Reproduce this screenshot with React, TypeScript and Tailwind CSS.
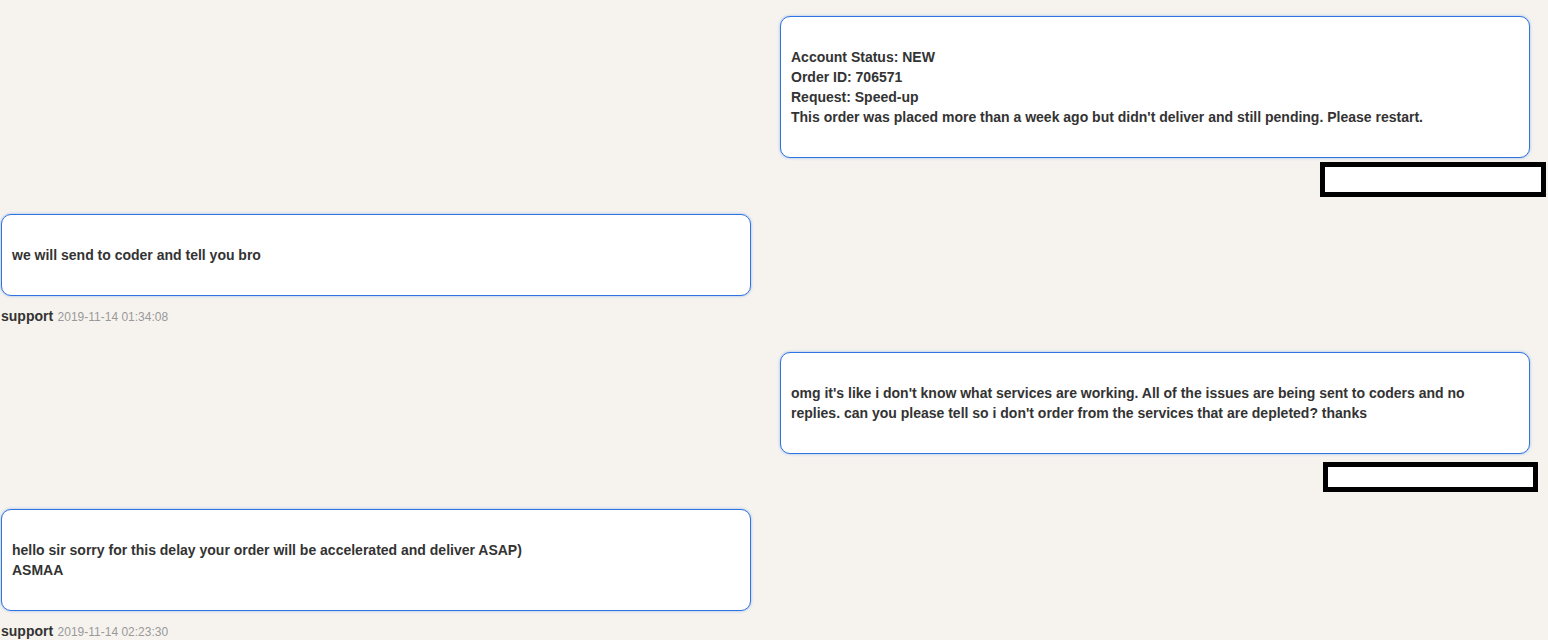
import React from "react";

function Bubble({ lines, align }: { lines: string[]; align: "left" | "right" }) {
  return (
    <div
      className={`w-[750px] rounded-[10px] border border-[#2f74e0] bg-white px-[10px] py-[30px] shadow-[0_0_3px_rgba(40,110,220,0.45)] ${
        align === "right" ? "self-end mr-[18px]" : "self-start ml-[1px]"
      }`}
    >
      {lines.map((l, i) => (
        <div key={i} className="text-[14px] font-bold leading-[20px] text-[#333]">
          {l}
        </div>
      ))}
    </div>
  );
}

function Meta({ time }: { time: string }) {
  return (
    <div className="mt-[10px] pl-[1px] leading-[20px]">
      <span className="text-[14px] font-bold text-[#333]">support</span>{" "}
      <span className="text-[12px] text-[#999]">{time}</span>
    </div>
  );
}

export default function App() {
  return (
    <div
      className="min-h-[640px] w-full overflow-hidden bg-[#f6f3ef] pt-[16px]"
      style={{ fontFamily: '"Liberation Sans", Arial, sans-serif' }}
    >
      <div className="flex flex-col">
        {/* customer message */}
        <Bubble
          align="right"
          lines={[
            "Account Status: NEW",
            "Order ID: 706571",
            "Request: Speed-up",
            "This order was placed more than a week ago but didn't deliver and still pending. Please restart.",
          ]}
        />
        <div className="mt-[4px] mr-[2px] h-[35px] w-[226px] self-end border-[5px] border-black bg-white" />

        {/* support reply */}
        <div className="mt-[17px] flex flex-col">
          <Bubble align="left" lines={["we will send to coder and tell you bro"]} />
          <Meta time="2019-11-14 01:34:08" />
        </div>

        {/* customer message */}
        <div className="mt-[25px] flex flex-col">
          <Bubble
            align="right"
            lines={[
              "omg it's like i don't know what services are working. All of the issues are being sent to coders and no",
              "replies. can you please tell so i don't order from the services that are depleted? thanks",
            ]}
          />
          <div className="mt-[8px] mr-[10px] h-[30px] w-[215px] self-end border-[5px] border-black bg-white" />
        </div>

        {/* support reply */}
        <div className="mt-[17px] flex flex-col">
          <Bubble
            align="left"
            lines={["hello sir sorry for this delay your order will be accelerated and deliver ASAP)", "ASMAA"]}
          />
          <Meta time="2019-11-14 02:23:30" />
        </div>
      </div>
    </div>
  );
}
